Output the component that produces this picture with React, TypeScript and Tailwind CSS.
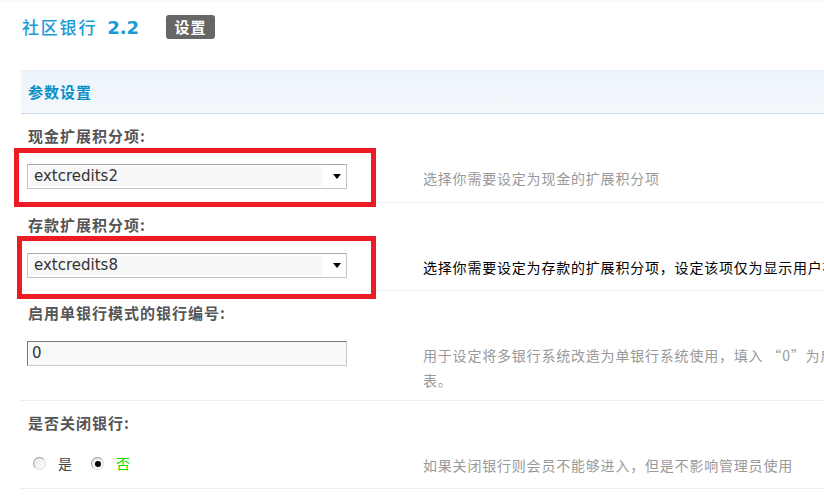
import React from "react";

const cjk = { fontFamily: '"Noto Sans CJK SC", "Noto Sans", sans-serif' };
const latin = { fontFamily: '"DejaVu Sans", "Noto Sans CJK SC", sans-serif' };

function Select({ value }: { value: string }) {
  return (
    <div className="w-[320px] h-[25px] border border-[#c4c4c4] border-t-[#a8a8a8] bg-white flex items-center pl-[3px] pr-[5px]">
      <div
        className="w-[291px] h-[19px] bg-[#f7f7f7] text-[15px] leading-[19px] text-[#333] pl-[3px]"
        style={latin}
      >
        {value}
      </div>
      <div className="flex-1 flex justify-end">
        <div className="w-0 h-0 border-l-[4.5px] border-r-[4.5px] border-t-[5px] border-l-transparent border-r-transparent border-t-black" />
      </div>
    </div>
  );
}

function Radio({ checked }: { checked: boolean }) {
  return (
    <div className="w-[13px] h-[13px] rounded-full border border-[#a0a0a0] border-r-[#dcdcdc] border-b-[#dcdcdc] bg-gradient-to-br from-[#e8e8e8] to-white flex items-center justify-center">
      {checked && <div className="w-[6px] h-[6px] rounded-full bg-black" />}
    </div>
  );
}

function Row({
  label,
  children,
  desc,
  pb,
  contentH,
}: {
  label: string;
  children: React.ReactNode;
  desc: React.ReactNode;
  pb: string;
  contentH: string;
}) {
  return (
    <div className={`pt-[11px] border-b border-dotted border-[#d3e2ef] ${pb}`}>
      <div
        className="pl-[7px] h-[22px] leading-[22px] text-[15px] font-bold text-[#555] tracking-[1px] whitespace-nowrap"
        style={cjk}
      >
        {label}
      </div>
      <div className={`mt-[17px] flex items-start ${contentH}`}>
        <div className="w-[402px] shrink-0 pl-[6px]">{children}</div>
        <div className="pt-[2px] whitespace-nowrap">{desc}</div>
      </div>
    </div>
  );
}

export default function App() {
  return (
    <div className="w-[824px] h-[502px] overflow-hidden bg-white relative" style={cjk}>
      <div className="h-[3px] bg-gradient-to-b from-[#eef7fb] to-white" />
      <div className="mt-[12px] h-[24px] flex items-center pl-[22px]">
        <span className="text-[17px] font-medium tracking-[1.8px] text-[#1a9ad6]" style={cjk}>
          社区银行
        </span>
        <span className="ml-[10px] text-[18px] font-bold text-[#1a9ad6]" style={latin}>
          2.2
        </span>
        <span
          className="ml-[27px] w-[49px] h-[24px] rounded-[3px] bg-[#666] text-white text-[15px] font-bold flex items-center justify-center tracking-[1px]"
          style={cjk}
        >
          设置
        </span>
      </div>

      <div className="ml-[21px] mt-[31px]">
        <div className="h-[44px] border-t border-[#e8eff7] border-b border-b-dotted border-b-[#cddced] bg-gradient-to-b from-[#edf4fc] to-[#f4f8fc] flex items-center pl-[7px]">
          <span className="text-[15px] font-bold text-[#0b8fc8] tracking-[1px]" style={cjk}>
            参数设置
          </span>
        </div>

        <Row
          label="现金扩展积分项:"
          pb="pb-[13px]"
          contentH="h-[25px]"
          desc={
            <div className="text-[14px] leading-[25px] text-[#999] tracking-[0.8px]" style={cjk}>
              选择你需要设定为现金的扩展积分项
            </div>
          }
        >
          <div className="relative">
            <Select value="extcredits2" />
            <div className="absolute left-[-13px] top-[-16px] w-[362px] h-[59px] border-[5px] border-[#ed1c24] pointer-events-none" />
          </div>
        </Row>

        <Row
          label="存款扩展积分项:"
          pb="pb-[12px]"
          contentH="h-[25px]"
          desc={
            <div className="text-[14px] leading-[25px] text-black tracking-[0.8px]" style={cjk}>
              选择你需要设定为存款的扩展积分项，设定该项仅为显示用户存款信息使用
            </div>
          }
        >
          <div className="relative">
            <Select value="extcredits8" />
            <div className="absolute left-[-10px] top-[-17px] w-[359px] h-[63px] border-[5px] border-[#ed1c24] pointer-events-none" />
          </div>
        </Row>

        <Row
          label="启用单银行模式的银行编号:"
          pb="pb-[7px]"
          contentH="h-[52px]"
          desc={
            <div className="text-[14px] leading-[25px] text-[#999] tracking-[0.8px]" style={cjk}>
              用于设定将多银行系统改造为单银行系统使用，填入 “0”为启用多银行模式，否则填入银行编号
              <br />
              表。
            </div>
          }
        >
          <div
            className="w-[320px] h-[25px] border border-[#ccc] border-t-[#777] border-l-[#777] bg-[#f9f9f9] text-[15px] leading-[23px] text-[#333] pl-[4px]"
            style={latin}
          >
            0
          </div>
        </Row>

        <Row
          label="是否关闭银行:"
          pb="pb-[12px]"
          contentH="h-[25px]"
          desc={
            <div className="text-[14px] leading-[25px] text-[#999] tracking-[0.8px]" style={cjk}>
              如果关闭银行则会员不能够进入，但是不影响管理员使用
            </div>
          }
        >
          <div className="h-[25px] flex items-center pl-[6px]">
            <Radio checked={false} />
            <span className="ml-[12px] text-[14px] text-[#444]" style={cjk}>
              是
            </span>
            <div className="ml-[19px]">
              <Radio checked={true} />
            </div>
            <span className="ml-[12px] text-[14px] text-[#00dd00]" style={cjk}>
              否
            </span>
          </div>
        </Row>
      </div>
    </div>
  );
}
